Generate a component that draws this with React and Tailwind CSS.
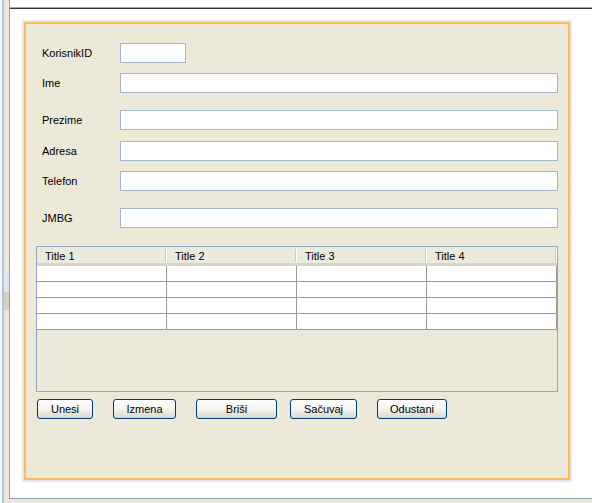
import React from 'react';

const FONT = { fontFamily: '"Liberation Sans", Arial, sans-serif' };

const fields = [
  { label: 'KorisnikID', width: 'w-[66px]', gap: '' },
  { label: 'Ime', width: 'w-[438px]', gap: 'mt-[10px]' },
  { label: 'Prezime', width: 'w-[438px]', gap: 'mt-[17px]' },
  { label: 'Adresa', width: 'w-[438px]', gap: 'mt-[11px]' },
  { label: 'Telefon', width: 'w-[438px]', gap: 'mt-[10px]' },
  { label: 'JMBG', width: 'w-[438px]', gap: 'mt-[17px]' },
];

const columns = ['Title 1', 'Title 2', 'Title 3', 'Title 4'];

const buttons = [
  { label: 'Unesi', cls: 'w-[56px] ml-[1px]' },
  { label: 'Izmena', cls: 'w-[63px] ml-[20px]' },
  { label: 'Briši', cls: 'w-[81px] ml-[20px]' },
  { label: 'Sačuvaj', cls: 'w-[67px] ml-[13px]' },
  { label: 'Odustani', cls: 'w-[70px] ml-[20px]' },
];

function FormRow({ label, width, gap }) {
  return (
    <div className={`flex items-center h-[20px] ${gap}`}>
      <span className="w-[84px] pl-[6px] text-[11px] text-black">{label}</span>
      <input
        type="text"
        className={`${width} h-[20px] bg-white border border-[#a3b6ca] outline-none px-1 text-[11px]`}
      />
    </div>
  );
}

function DataTable() {
  return (
    <div className="mt-[18px] w-[522px] h-[146px] border border-[#8fa8c2] bg-[#ece9d8] flex flex-col">
      {/* header */}
      <div className="flex h-[19px] bg-[#ebeadb] border-b-[3px] border-[#d9d5c6]">
        {columns.map((c) => (
          <div key={c} className="relative w-[130px] flex items-center pl-[8px] pt-[2px] text-[11px] text-black">
            {c}
            <span className="absolute right-0 top-[2px] bottom-[1px] w-[2px] border-l border-[#cfcbbb] bg-white" />
          </div>
        ))}
      </div>
      {/* rows */}
      {[0, 1, 2, 3].map((r) => (
        <div key={r} className="flex h-[16px] bg-white border-b border-[#9a9a9a]">
          {columns.map((c) => (
            <div key={c} className="w-[130px] h-full border-r border-[#9a9a9a]" />
          ))}
        </div>
      ))}
    </div>
  );
}

export default function App() {
  return (
    <div className="w-[592px] h-[503px] flex bg-white overflow-hidden" style={FONT}>
      {/* side splitter strip */}
      <div className="w-[9px] h-full flex bg-[#ece9d8]">
        <div className="w-[2px] h-full bg-[#f2f5fb]" />
        <div className="w-[1px] h-full bg-[#b9c9e4]" />
        <div className="w-[1px] h-full bg-[#c2c0b6]" />
        <div className="flex-1 h-full flex flex-col">
          <div className="h-[270px]" />
          <div className="h-[22px] bg-[#dfe6f3]" />
          <div className="h-[18px] bg-[#d4d0c4]" />
        </div>
      </div>

      <div className="w-[583px] flex flex-col">
        <div className="h-[499px] flex flex-col bg-white border-l border-b border-[#85a2c2]">
          <div className="h-[7px]" />
          <div className="h-[1px] bg-[#a8a8a8]" />
          <div className="h-[1px] bg-[#2e2e2e]" />
          <div className="pt-[11px] pl-[12px]">
            {/* focused panel */}
            <div className="w-[550px] h-[462px] p-[2px] bg-[#e4e4fb]">
              <div className="w-full h-full border-2 border-[#f9bd57] bg-[#ece9d8] pt-[19px] pl-[10px]">
                {fields.map((f) => (
                  <FormRow key={f.label} {...f} />
                ))}
                <DataTable />
                <div className="mt-[7px] flex">
                  {buttons.map((b) => (
                    <button
                      key={b.label}
                      type="button"
                      className={`${b.cls} h-[20px] rounded-[3px] border border-[#003c74] bg-linear-to-b from-white via-[#f5f4ef] to-[#dad6ca] text-[11px] text-black`}
                    >
                      {b.label}
                    </button>
                  ))}
                </div>
              </div>
            </div>
          </div>
        </div>
        <div className="flex-1 bg-[#ece9d8]" />
      </div>
    </div>
  );
}
